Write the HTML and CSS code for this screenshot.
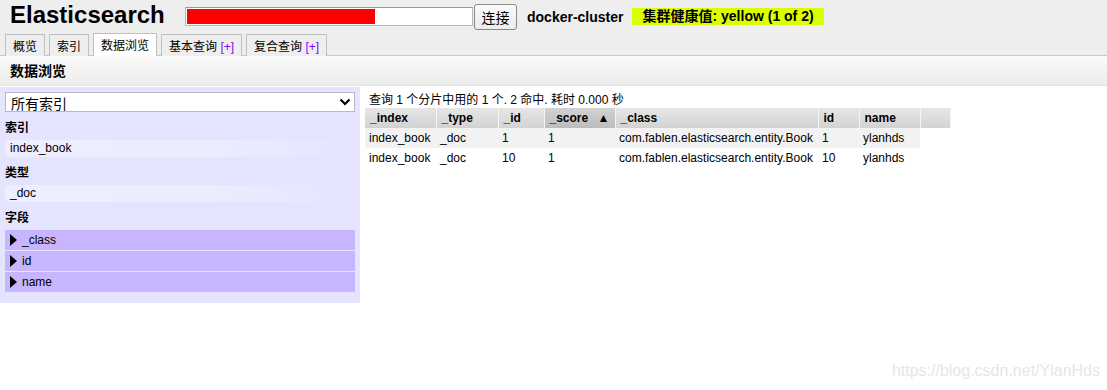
FILE: index.html
```html
<!DOCTYPE html>
<html>
<head>
<meta charset="utf-8">
<link rel="stylesheet" href="styles.css">
</head>
<body>
<div class="header">
  <div class="topbar">
    <h1 class="logo">Elasticsearch</h1>
    <div class="urlbox"><div class="urlfill"></div></div>
    <button class="connect">连接</button>
    <span class="cluster">docker-cluster</span>
    <span class="health">集群健康值: yellow (1 of 2)</span>
  </div>
  <div class="tabs">
    <div class="tab">概览</div>
    <div class="tab">索引</div>
    <div class="tab active">数据浏览</div>
    <div class="tab">基本查询 <span class="plus">[+]</span></div>
    <div class="tab">复合查询 <span class="plus">[+]</span></div>
  </div>
</div>
<div class="subhead">数据浏览</div>
<div class="main">
  <div class="side">
    <div class="selectbox"><span>所有索引</span><svg width="12" height="8" viewBox="0 0 12 8"><path d="M1.5 1.5 L6 6 L10.5 1.5" fill="none" stroke="#000" stroke-width="2.2"/></svg></div>
    <div class="label">索引</div>
    <div class="item">index_book</div>
    <div class="label">类型</div>
    <div class="item">_doc</div>
    <div class="label">字段</div>
    <div class="fields">
      <div class="field"><span class="tri"></span>_class</div>
      <div class="field"><span class="tri"></span>id</div>
      <div class="field"><span class="tri"></span>name</div>
    </div>
  </div>
  <div class="results">
    <div class="summary">查询 1 个分片中用的 1 个. 2 命中. 耗时 0.000 秒</div>
    <table class="grid">
      <thead>
        <tr>
          <th class="c1">_index</th>
          <th class="c2">_type</th>
          <th class="c3">_id</th>
          <th class="c4 sorted">_score <span class="arrow">▲</span></th>
          <th class="c5">_class</th>
          <th class="c6">id</th>
          <th class="c7">name</th>
          <th class="c8"></th>
        </tr>
      </thead>
      <tbody>
        <tr class="odd">
          <td>index_book</td><td>_doc</td><td>1</td><td>1</td><td>com.fablen.elasticsearch.entity.Book</td><td>1</td><td>ylanhds</td><td class="blank"></td>
        </tr>
        <tr>
          <td>index_book</td><td>_doc</td><td>10</td><td>1</td><td>com.fablen.elasticsearch.entity.Book</td><td>10</td><td>ylanhds</td><td class="blank"></td>
        </tr>
      </tbody>
    </table>
  </div>
</div>
<div class="watermark">https://blog.csdn.net/YlanHds</div>
</body>
</html>
```

FILE: styles.css
```css
* { box-sizing: border-box; }
html, body { margin: 0; padding: 0; }
body {
  font-family: "Liberation Sans", Arial, "Noto Sans CJK SC", sans-serif;
  font-size: 12px;
  color: #000;
  background: #fff;
  width: 1107px;
  height: 390px;
  position: relative;
  overflow: hidden;
}
.header {
  background: #eee;
  height: 56px;
  border-bottom: 1px solid #c8c8c8;
  display: flex;
  flex-direction: column;
}
.topbar {
  display: flex;
  align-items: center;
  height: 35px;
  padding-left: 10px;
}
.logo {
  margin: 0;
  font-size: 24px;
  font-weight: bold;
  line-height: 30px;
  margin-top: -4px;
  width: 175px;
}
.urlbox {
  width: 288px;
  height: 19px;
  background: #fff;
  border: 1px solid #bbb;
  border-top-color: #999;
  padding: 1px;
  margin-top: -1px;
}
.urlfill {
  width: 188px;
  height: 15px;
  background: #ff0000;
}
.connect {
  margin: 0 0 0 1px;
  width: 43px;
  height: 26px;
  font-family: "Noto Sans CJK SC", sans-serif;
  font-size: 14px;
  line-height: 20px;
  padding: 0;
  background: linear-gradient(#fafafa, #ececec);
  border: 1px solid #888;
  border-radius: 3px;
  color: #000;
  margin-top: -1px;
}
.cluster {
  font-size: 14px;
  font-weight: bold;
  margin-left: 10px;
  margin-top: -1px;
  white-space: nowrap;
}
.health {
  font-size: 14px;
  font-weight: bold;
  background: #dcff00;
  margin-left: 9px;
  padding: 0 10px;
  height: 17px;
  line-height: 17px;
  white-space: nowrap;
  margin-top: -1px;
  font-family: "Liberation Sans", "Noto Sans CJK SC", sans-serif;
}
.tabs {
  display: flex;
  gap: 4px;
  padding-left: 5px;
  height: 21px;
  align-items: flex-end;
}
.tab {
  height: 22px;
  border: 1px solid #c0c0c0;
  border-bottom: none;
  background: #eee;
  padding: 4px 7px 0;
  line-height: 16px;
  white-space: nowrap;
  margin-bottom: -1px;
}
.tab.active {
  background: #fff;
  height: 23px;
  position: relative;
}
.plus { color: #8800ff; }
.subhead {
  height: 30px;
  background: linear-gradient(#fafafa, #ececec);
  font-size: 14px;
  font-weight: bold;
  line-height: 30px;
  padding-left: 10px;
  border-bottom: 1px solid #e4e4e4;
}
.main {
  display: flex;
  align-items: flex-start;
  margin-top: 1px;
}
.side {
  width: 360px;
  height: 216px;
  background: #e4e4ff;
  padding: 5px 5px 0;
}
.selectbox {
  height: 20px;
  background: #fff;
  border: 1px solid #b8b8c8;
  display: flex;
  align-items: center;
  justify-content: space-between;
  padding: 0 3px 0 5px;
  font-size: 14px;
  line-height: 18px;
  overflow: hidden;
}
.selectbox span { margin-top: 3px; }
.label {
  font-weight: bold;
  font-size: 12px;
  height: 26px;
  line-height: 28px;
  margin-top: 2px;
}
.item {
  height: 17px;
  line-height: 17px;
  padding-left: 5px;
  border-radius: 5px 0 0 5px;
  background: linear-gradient(90deg, #eeeeff 0%, #ececff 60%, rgba(236,236,255,0) 100%);
}
.fields {
  display: flex;
  flex-direction: column;
  gap: 1px;
}
.field {
  height: 20px;
  background: #c7b5ff;
  line-height: 20px;
  display: flex;
  align-items: center;
  padding-left: 5px;
}
.tri {
  width: 0;
  height: 0;
  border-top: 6px solid transparent;
  border-bottom: 6px solid transparent;
  border-left: 7px solid #000;
  margin-right: 5px;
}
.results {
  padding: 5px 0 0 5px;
}
.summary {
  padding-left: 4px;
  height: 16px;
  line-height: 16px;
}
.grid {
  border-collapse: collapse;
}
.grid th {
  height: 20px;
  text-align: left;
  font-weight: bold;
  padding: 0 4px 0 5px;
  background: linear-gradient(#e6e6e6, #d2d2d2);
  border-right: 1px solid #f4f4f4;
  white-space: nowrap;
}
.grid th.sorted { background: linear-gradient(#d2d2d2, #bcbcbc); }
.arrow { font-size: 12px; margin-left: 6px; }
.c1 { width: 71px; }
.c2 { width: 62px; }
.c3 { width: 46px; }
.c4 { width: 71px; }
.c5 { width: 203px; }
.c6 { width: 41px; }
.c7 { width: 61px; }
.c8 { width: 30px; }
.grid td {
  height: 20px;
  padding: 0 4px;
  white-space: nowrap;
}
.grid tr.odd td { background: #f2f2f2; }
.grid tr.odd td.blank { background: transparent; }
.watermark {
  position: absolute;
  right: 7px;
  bottom: 10px;
  font-family: "Liberation Sans", sans-serif;
  font-size: 16px;
  color: #e6e6e6;
}
```
